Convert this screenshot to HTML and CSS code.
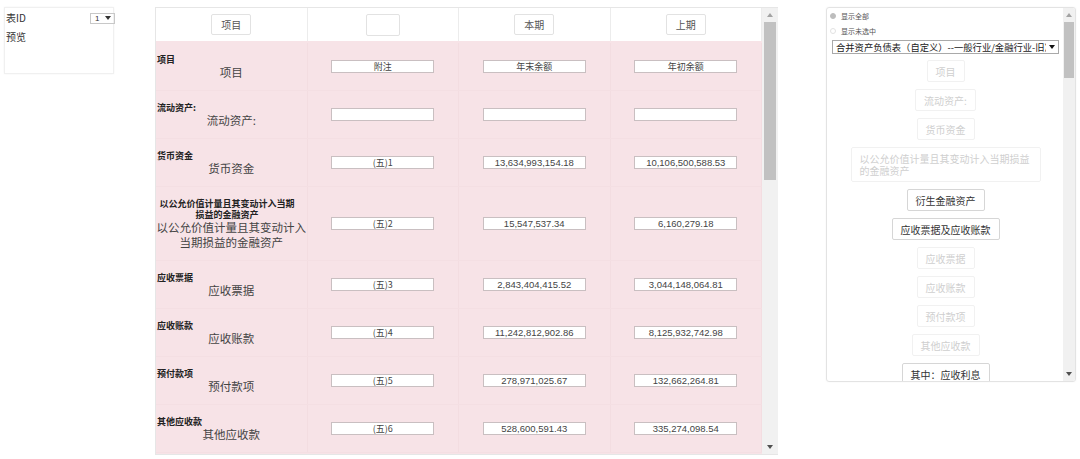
FILE: index.html
```html
<!DOCTYPE html>
<html lang="zh-CN">
<head>
<meta charset="utf-8">
<title>报表映射</title>
<link rel="stylesheet" href="styles.css">
</head>
<body>
<div class="page">
  <div class="side">
    <div class="side-row"><span>表ID</span><span class="mini-select">1 <i class="caret"></i></span></div>
    <div class="side-row second">预览</div>
  </div>

  <div class="grid-panel">
    <div class="grid-main">
      <div class="grid-head">
        <div class="hcell"><span class="hbtn">项目</span></div>
        <div class="hcell"><span class="hbtn empty"></span></div>
        <div class="hcell"><span class="hbtn">本期</span></div>
        <div class="hcell"><span class="hbtn">上期</span></div>
      </div>
      <div class="grid-body">
        <div class="row">
          <div class="cell label"><span class="tag">项目</span><div class="name">项目</div></div>
          <div class="cell"><span class="inp">附注</span></div>
          <div class="cell"><span class="inp">年末余额</span></div>
          <div class="cell"><span class="inp">年初余额</span></div>
        </div>
        <div class="row">
          <div class="cell label"><span class="tag">流动资产:</span><div class="name">流动资产:</div></div>
          <div class="cell"><span class="inp"></span></div>
          <div class="cell"><span class="inp"></span></div>
          <div class="cell"><span class="inp"></span></div>
        </div>
        <div class="row">
          <div class="cell label"><span class="tag">货币资金</span><div class="name">货币资金</div></div>
          <div class="cell"><span class="inp">(五)1</span></div>
          <div class="cell"><span class="inp num">13,634,993,154.18</span></div>
          <div class="cell"><span class="inp num">10,106,500,588.53</span></div>
        </div>
        <div class="row">
          <div class="cell label"><span class="tag">以公允价值计量且其变动计入当期损益的金融资产</span><div class="name">以公允价值计量且其变动计入当期损益的金融资产</div></div>
          <div class="cell"><span class="inp">(五)2</span></div>
          <div class="cell"><span class="inp num">15,547,537.34</span></div>
          <div class="cell"><span class="inp num">6,160,279.18</span></div>
        </div>
        <div class="row">
          <div class="cell label"><span class="tag">应收票据</span><div class="name">应收票据</div></div>
          <div class="cell"><span class="inp">(五)3</span></div>
          <div class="cell"><span class="inp num">2,843,404,415.52</span></div>
          <div class="cell"><span class="inp num">3,044,148,064.81</span></div>
        </div>
        <div class="row">
          <div class="cell label"><span class="tag">应收账款</span><div class="name">应收账款</div></div>
          <div class="cell"><span class="inp">(五)4</span></div>
          <div class="cell"><span class="inp num">11,242,812,902.86</span></div>
          <div class="cell"><span class="inp num">8,125,932,742.98</span></div>
        </div>
        <div class="row">
          <div class="cell label"><span class="tag">预付款项</span><div class="name">预付款项</div></div>
          <div class="cell"><span class="inp">(五)5</span></div>
          <div class="cell"><span class="inp num">278,971,025.67</span></div>
          <div class="cell"><span class="inp num">132,662,264.81</span></div>
        </div>
        <div class="row">
          <div class="cell label"><span class="tag">其他应收款</span><div class="name">其他应收款</div></div>
          <div class="cell"><span class="inp">(五)6</span></div>
          <div class="cell"><span class="inp num">528,600,591.43</span></div>
          <div class="cell"><span class="inp num">335,274,098.54</span></div>
        </div>
      </div>
    </div>
    <div class="vscroll">
      <div class="arrow"><i class="tri up"></i></div>
      <div class="thumb"></div>
      <div class="track"></div>
      <div class="arrow"><i class="tri down"></i></div>
    </div>
  </div>

  <div class="tree-panel">
    <div class="tree">
      <div class="radio-row"><i class="radio on"></i>显示全部</div>
      <div class="radio-row"><i class="radio"></i>显示未选中</div>
      <div class="select"><span class="sel-text">合并资产负债表（自定义）--一般行业/金融行业-旧准则</span><i class="caret dark"></i></div>
      <div class="items">
        <span class="item faint">项目</span>
        <span class="item faint">流动资产:</span>
        <span class="item faint">货币资金</span>
        <span class="item faint wide">以公允价值计量且其变动计入当期损益的金融资产</span>
        <span class="item">衍生金融资产</span>
        <span class="item">应收票据及应收账款</span>
        <span class="item faint">应收票据</span>
        <span class="item faint">应收账款</span>
        <span class="item faint">预付款项</span>
        <span class="item faint">其他应收款</span>
        <span class="item">其中：应收利息</span>
      </div>
    </div>
    <div class="vscroll small">
      <div class="arrow"><i class="tri up"></i></div>
      <div class="thumb"></div>
      <div class="track"></div>
      <div class="arrow"><i class="tri down"></i></div>
    </div>
  </div>
</div>
</body>
</html>
```

FILE: styles.css
```css
* { box-sizing: border-box; }
html, body { margin: 0; padding: 0; background: #fff; }
body {
  width: 1080px;
  height: 459px;
  overflow: hidden;
  font-family: "Noto Sans CJK SC", "Liberation Sans", sans-serif;
  color: #333;
}
.page {
  display: flex;
  align-items: flex-start;
  padding: 7px 0 0 4px;
}

/* left small panel */
.side {
  width: 110px;
  height: 67px;
  border: 1px solid #f0f0f0;
  box-shadow: 0 0 2px rgba(0,0,0,0.05);
  padding: 4px 0 0 1px;
  margin-right: 41px;
  font-size: 10px;
  line-height: 12px;
  color: #333;
}
.side-row {
  display: flex;
  justify-content: space-between;
  align-items: center;
  height: 12px;
}
.side-row.second { margin-top: 7px; }
.mini-select {
  display: flex;
  align-items: center;
  justify-content: space-between;
  width: 25px;
  height: 11px;
  margin-right: -2px;
  border: 1px solid #c8c8c8;
  padding: 0 3px 0 4px;
  font-family: "Liberation Sans", sans-serif;
  font-size: 8px;
  line-height: 9px;
}
.caret {
  width: 0;
  height: 0;
  border-left: 3px solid transparent;
  border-right: 3px solid transparent;
  border-top: 4px solid #333;
}

/* main grid panel */
.grid-panel {
  display: flex;
  width: 623px;
  height: 448px;
  border: 1px solid #e6e6e6;
  border-right: none;
  overflow: hidden;
}
.grid-main {
  flex: 1;
  display: flex;
  flex-direction: column;
  min-width: 0;
}
.grid-head {
  display: grid;
  grid-template-columns: repeat(4, 1fr);
  height: 33px;
  background: #fff;
  flex: none;
}
.hcell {
  display: flex;
  align-items: center;
  justify-content: center;
  border-right: 1px solid #ececec;
}
.hbtn {
  display: inline-flex;
  align-items: center;
  justify-content: center;
  height: 21px;
  padding: 0 9px;
  border: 1px solid #e2e2e2;
  border-radius: 2px;
  font-size: 10px;
  color: #555;
  background: #fff;
}
.hbtn.empty { width: 34px; height: 22px; }
.grid-body {
  flex: 1;
  padding-top: 2px;
  background: #f7e3e7;
  overflow: hidden;
}
.row {
  display: grid;
  grid-template-columns: repeat(4, 1fr);
  border-bottom: 1px solid #f4dfe3;
}
.cell {
  display: flex;
  align-items: center;
  justify-content: center;
  border-right: 1px solid #f3dde1;
}
.cell.label {
  display: block;
  padding: 11px 0 10px 0;
  font-size: 9px;
  line-height: 11px;
}
.tag {
  display: inline-block;
  vertical-align: top;
  max-width: 140px;
  margin-left: 1px;
  font-size: 9px;
  line-height: 11px;
  font-weight: bold;
  text-align: center;
  color: #222;
}
.name {
  font-size: 11.5px;
  line-height: 15px;
  text-align: center;
  color: #444;
}
.inp {
  display: flex;
  align-items: center;
  justify-content: center;
  width: 103px;
  height: 13px;
  background: #fff;
  border: 1px solid #c9bfc1;
  font-size: 9px;
  color: #444;
  white-space: nowrap;
}
.inp.num {
  font-family: "Liberation Sans", sans-serif;
  font-size: 9.5px;
}

/* scrollbars */
.vscroll {
  flex: none;
  width: 16px;
  display: flex;
  flex-direction: column;
  background: #f1f1f1;
}
.vscroll .arrow {
  height: 14px;
  display: flex;
  align-items: center;
  justify-content: center;
  flex: none;
}
.vscroll .thumb {
  height: 158px;
  margin: 0 2px;
  background: #c1c1c1;
  flex: none;
}
.vscroll .track { flex: 1; }
.tri {
  width: 0;
  height: 0;
  border-left: 3px solid transparent;
  border-right: 3px solid transparent;
}
.tri.up { border-bottom: 4px solid #a3a3a3; }
.tri.down { border-top: 4px solid #505050; }
.vscroll.small { width: 12px; }
.vscroll.small .thumb { height: 56px; margin: 0 1px; }

/* right tree panel */
.tree-panel {
  display: flex;
  width: 250px;
  height: 375px;
  margin-left: 48px;
  border: 1px solid #e3e3e3;
  border-radius: 3px;
  box-shadow: 0 0 2px rgba(0,0,0,0.05);
  overflow: hidden;
}
.tree {
  flex: 1;
  min-width: 0;
  padding: 3px 4px 0 5px;
  overflow: hidden;
}
.radio-row {
  display: flex;
  align-items: center;
  height: 10px;
  font-size: 7px;
  color: #555;
}
.radio-row + .radio-row { margin-top: 5px; }
.radio {
  width: 6px;
  height: 6px;
  border-radius: 50%;
  border: 1px solid #e2e2e2;
  margin: 0 5px 0 -2px;
}
.radio.on { background: #bdbdbd; border-color: #bdbdbd; }
.select {
  display: flex;
  align-items: center;
  height: 14px;
  margin-top: 4px;
  border: 1px solid #a9a9a9;
  padding: 0 3px 0 3px;
  background: #fff;
}
.sel-text {
  flex: 1;
  overflow: hidden;
  white-space: nowrap;
  font-size: 9.3px;
  line-height: 12px;
  color: #222;
}
.caret.dark { margin-left: 3px; border-top-color: #111; }
.items {
  display: flex;
  flex-direction: column;
  align-items: center;
  gap: 7px;
  margin-top: 6px;
}
.item {
  display: flex;
  align-items: center;
  justify-content: center;
  height: 22px;
  padding: 0 8px;
  border: 1px solid #d6d6d6;
  border-radius: 2px;
  font-size: 10px;
  color: #333;
  background: #fff;
  white-space: nowrap;
  flex: none;
}
.item.faint {
  color: #cfcfcf;
  border-color: #f1f1f1;
}
.item.wide {
  height: 35px;
  max-width: 190px;
  white-space: normal;
  justify-content: flex-start;
  text-align: left;
  line-height: 12px;
  padding: 4px 8px;
}
```
